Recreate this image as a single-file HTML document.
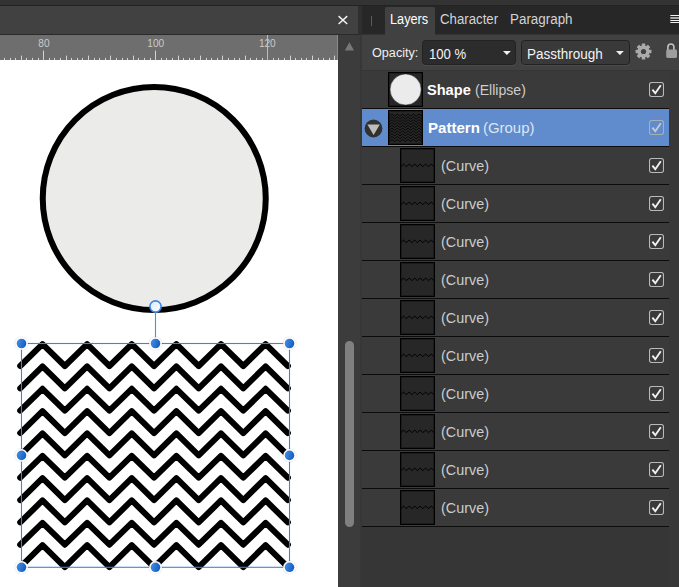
<!DOCTYPE html>
<html><head><meta charset="utf-8"><title>Layers</title>
<style>
html,body{margin:0;padding:0;}
body{width:679px;height:587px;overflow:hidden;background:#3c3c3c;font-family:"Liberation Sans",sans-serif;position:relative;}
.abs{position:absolute;}
.tx{position:absolute;white-space:nowrap;line-height:18px;transform-origin:0 50%;}
#topband{left:0;top:0;width:679px;height:5px;background:#333;}
#topline{left:0;top:5px;width:679px;height:1px;background:#232323;}
#toolbar{left:0;top:6px;width:358px;height:28px;background:#414141;}
#gap{left:358px;top:6px;width:4px;height:29px;background:#2f2f2f;}
#tbline{left:0;top:34px;width:358px;height:1px;background:#2a2a2a;}
#ruler{left:0;top:35px;width:337px;height:25px;background:#6e6e6e;overflow:hidden;}
#rulerR{left:337px;top:35px;width:1px;height:25px;background:#8a8a8a;}
#canvas{left:0;top:60px;width:338px;height:527px;background:#fff;}
#vscroll{left:338px;top:35px;width:22px;height:552px;background:#3c3c3c;}
#vdiv{left:360px;top:35px;width:2px;height:552px;background:#373737;}
#thumb{left:345px;top:340.5px;width:9px;height:186.5px;border-radius:4.5px;background:#808080;}
#panel{left:362px;top:6px;width:317px;height:581px;background:#363636;}
#tabbar{left:0;top:0;width:317px;height:28px;background:#272727;border-bottom:1px solid #333;}
#tabL{left:22.5px;top:1.3px;width:50px;height:28px;background:#414141;border-radius:2px 2px 0 0;}
.tab{position:absolute;top:5.6px;font-size:13.5px;line-height:16px;color:#d2d2d2;white-space:nowrap;}
#oprow{left:0;top:29px;width:317px;height:35px;background:#414141;}
.dd{position:absolute;top:5.4px;height:24.2px;background:#2c2c2c;border:1px solid #222;border-radius:3.5px;box-sizing:border-box;box-shadow:0 1px 0 rgba(255,255,255,0.06);}
.ddt{position:absolute;font-size:13.5px;line-height:16px;color:#f2f2f2;white-space:nowrap;}
#layers{left:0;top:0;width:307px;height:581px;}
.row{position:absolute;left:0;width:307px;height:37px;background:#3a3a3a;border-top:1px solid #0c0c0c;}
.row.sel{background:#608ccd;}
.th{position:absolute;top:1.2px;width:34.6px;height:34.5px;overflow:hidden;background:#272727;box-shadow:inset 0 0 0 1px #000, inset 0 0 0 2px rgba(0,0,0,0.3);}
.th svg{display:block;}
.lt{position:absolute;top:11px;font-size:13.5px;line-height:16px;color:#fff;white-space:nowrap;}
.lt b{font-weight:700;font-size:14px;}
.g{color:#cfcfcf;}
.g2{color:#dbe4f3;}
.ck{position:absolute;left:287px;top:11px;}
.tog{position:absolute;left:2.3px;top:9.8px;}
#rightcol{left:307px;top:64px;width:10px;height:517px;background:#383838;}
</style></head><body>
<div class="abs" id="topband"></div><div class="abs" id="topline"></div>
<div class="abs" id="toolbar"></div><div class="abs" id="gap"></div><div class="abs" id="tbline"></div>
<div class="abs" id="ruler"></div><div class="abs" id="rulerR"></div>
<div class="abs" id="canvas"></div>
<div class="abs" id="vscroll"></div><div class="abs" id="vdiv"></div><div class="abs" id="thumb"></div>

<svg class="abs" style="left:0;top:0" width="362" height="587" viewBox="0 0 362 587">
<defs>
<linearGradient id="hg" x1="0" y1="0" x2="1" y2="0.3"><stop offset="0" stop-color="#4a90e2"/><stop offset="1" stop-color="#1660c4"/></linearGradient>
<linearGradient id="rg" x1="0" y1="0" x2="1" y2="1"><stop offset="0" stop-color="#dbe8fa"/><stop offset="1" stop-color="#ffffff"/></linearGradient>
<clipPath id="cv"><rect x="0" y="60" width="338" height="527"/></clipPath>
</defs>
<g font-family="Liberation Sans, sans-serif" font-size="10.1" fill="#cccccc" text-anchor="middle" opacity="0.99">
<text x="43.9" y="46.8">80</text><text x="155.7" y="46.8">100</text><text x="267.3" y="46.8">120</text>
</g>
<rect x="4" y="57.90" width="1" height="2.10" fill="#d4d4d4"/><rect x="10" y="57.90" width="1" height="2.10" fill="#d4d4d4"/><rect x="15" y="57.90" width="1" height="2.10" fill="#d4d4d4"/><rect x="21" y="55.60" width="1" height="4.40" fill="#d4d4d4"/><rect x="26" y="57.90" width="1" height="2.10" fill="#d4d4d4"/><rect x="32" y="57.90" width="1" height="2.10" fill="#d4d4d4"/><rect x="38" y="57.90" width="1" height="2.10" fill="#d4d4d4"/><rect x="43" y="50.60" width="1" height="9.40" fill="#d4d4d4"/><rect x="49" y="57.90" width="1" height="2.10" fill="#d4d4d4"/><rect x="54" y="57.90" width="1" height="2.10" fill="#d4d4d4"/><rect x="60" y="57.90" width="1" height="2.10" fill="#d4d4d4"/><rect x="66" y="55.60" width="1" height="4.40" fill="#d4d4d4"/><rect x="71" y="57.90" width="1" height="2.10" fill="#d4d4d4"/><rect x="77" y="57.90" width="1" height="2.10" fill="#d4d4d4"/><rect x="82" y="57.90" width="1" height="2.10" fill="#d4d4d4"/><rect x="88" y="55.60" width="1" height="4.40" fill="#d4d4d4"/><rect x="94" y="57.90" width="1" height="2.10" fill="#d4d4d4"/><rect x="99" y="57.90" width="1" height="2.10" fill="#d4d4d4"/><rect x="105" y="57.90" width="1" height="2.10" fill="#d4d4d4"/><rect x="110" y="55.60" width="1" height="4.40" fill="#d4d4d4"/><rect x="116" y="57.90" width="1" height="2.10" fill="#d4d4d4"/><rect x="122" y="57.90" width="1" height="2.10" fill="#d4d4d4"/><rect x="127" y="57.90" width="1" height="2.10" fill="#d4d4d4"/><rect x="133" y="55.60" width="1" height="4.40" fill="#d4d4d4"/><rect x="138" y="57.90" width="1" height="2.10" fill="#d4d4d4"/><rect x="144" y="57.90" width="1" height="2.10" fill="#d4d4d4"/><rect x="150" y="57.90" width="1" height="2.10" fill="#d4d4d4"/><rect x="155" y="50.60" width="1" height="9.40" fill="#d4d4d4"/><rect x="161" y="57.90" width="1" height="2.10" fill="#d4d4d4"/><rect x="166" y="57.90" width="1" height="2.10" fill="#d4d4d4"/><rect x="172" y="57.90" width="1" height="2.10" fill="#d4d4d4"/><rect x="178" y="55.60" width="1" height="4.40" fill="#d4d4d4"/><rect x="183" y="57.90" width="1" height="2.10" fill="#d4d4d4"/><rect x="189" y="57.90" width="1" height="2.10" fill="#d4d4d4"/><rect x="194" y="57.90" width="1" height="2.10" fill="#d4d4d4"/><rect x="200" y="55.60" width="1" height="4.40" fill="#d4d4d4"/><rect x="206" y="57.90" width="1" height="2.10" fill="#d4d4d4"/><rect x="211" y="57.90" width="1" height="2.10" fill="#d4d4d4"/><rect x="217" y="57.90" width="1" height="2.10" fill="#d4d4d4"/><rect x="222" y="55.60" width="1" height="4.40" fill="#d4d4d4"/><rect x="228" y="57.90" width="1" height="2.10" fill="#d4d4d4"/><rect x="234" y="57.90" width="1" height="2.10" fill="#d4d4d4"/><rect x="239" y="57.90" width="1" height="2.10" fill="#d4d4d4"/><rect x="245" y="55.60" width="1" height="4.40" fill="#d4d4d4"/><rect x="250" y="57.90" width="1" height="2.10" fill="#d4d4d4"/><rect x="256" y="57.90" width="1" height="2.10" fill="#d4d4d4"/><rect x="262" y="57.90" width="1" height="2.10" fill="#d4d4d4"/><rect x="267" y="50.60" width="1" height="9.40" fill="#d4d4d4"/><rect x="273" y="57.90" width="1" height="2.10" fill="#d4d4d4"/><rect x="278" y="57.90" width="1" height="2.10" fill="#d4d4d4"/><rect x="284" y="57.90" width="1" height="2.10" fill="#d4d4d4"/><rect x="290" y="55.60" width="1" height="4.40" fill="#d4d4d4"/><rect x="295" y="57.90" width="1" height="2.10" fill="#d4d4d4"/><rect x="301" y="57.90" width="1" height="2.10" fill="#d4d4d4"/><rect x="306" y="57.90" width="1" height="2.10" fill="#d4d4d4"/><rect x="312" y="55.60" width="1" height="4.40" fill="#d4d4d4"/><rect x="318" y="57.90" width="1" height="2.10" fill="#d4d4d4"/><rect x="323" y="57.90" width="1" height="2.10" fill="#d4d4d4"/><rect x="329" y="57.90" width="1" height="2.10" fill="#d4d4d4"/><rect x="334" y="55.60" width="1" height="4.40" fill="#d4d4d4"/>
<rect x="267" y="35" width="1" height="25" fill="#bdbdbd"/>
<!-- close X -->
<path d="M338.6 16.1 L347.2 24 M347.2 16.1 L338.6 24" stroke="#f2f2f2" stroke-width="1.45" fill="none"/>
<!-- scroll up arrow -->
<path d="M344.8 50.6 L349.4 42.3 L354 50.6 Z" fill="#777"/>
<g clip-path="url(#cv)">
<circle cx="154.25" cy="198.5" r="111.5" fill="#ebebe9" stroke="#000" stroke-width="6"/>
<g fill="none" stroke="#000" stroke-width="6" stroke-linecap="round" stroke-linejoin="round"><polyline points="20.19,366.00 42.50,344.10 64.81,366.00 87.12,344.10 109.43,366.00 131.74,344.10 154.05,366.00 176.36,344.10 198.67,366.00 220.98,344.10 243.29,366.00 265.60,344.10 287.91,366.00"/><polyline points="20.19,388.34 42.50,366.44 64.81,388.34 87.12,366.44 109.43,388.34 131.74,366.44 154.05,388.34 176.36,366.44 198.67,388.34 220.98,366.44 243.29,388.34 265.60,366.44 287.91,388.34"/><polyline points="20.19,410.68 42.50,388.78 64.81,410.68 87.12,388.78 109.43,410.68 131.74,388.78 154.05,410.68 176.36,388.78 198.67,410.68 220.98,388.78 243.29,410.68 265.60,388.78 287.91,410.68"/><polyline points="20.19,433.02 42.50,411.12 64.81,433.02 87.12,411.12 109.43,433.02 131.74,411.12 154.05,433.02 176.36,411.12 198.67,433.02 220.98,411.12 243.29,433.02 265.60,411.12 287.91,433.02"/><polyline points="20.19,455.36 42.50,433.46 64.81,455.36 87.12,433.46 109.43,455.36 131.74,433.46 154.05,455.36 176.36,433.46 198.67,455.36 220.98,433.46 243.29,455.36 265.60,433.46 287.91,455.36"/><polyline points="20.19,477.70 42.50,455.80 64.81,477.70 87.12,455.80 109.43,477.70 131.74,455.80 154.05,477.70 176.36,455.80 198.67,477.70 220.98,455.80 243.29,477.70 265.60,455.80 287.91,477.70"/><polyline points="20.19,500.04 42.50,478.14 64.81,500.04 87.12,478.14 109.43,500.04 131.74,478.14 154.05,500.04 176.36,478.14 198.67,500.04 220.98,478.14 243.29,500.04 265.60,478.14 287.91,500.04"/><polyline points="20.19,522.38 42.50,500.48 64.81,522.38 87.12,500.48 109.43,522.38 131.74,500.48 154.05,522.38 176.36,500.48 198.67,522.38 220.98,500.48 243.29,522.38 265.60,500.48 287.91,522.38"/><polyline points="20.19,544.72 42.50,522.82 64.81,544.72 87.12,522.82 109.43,544.72 131.74,522.82 154.05,544.72 176.36,522.82 198.67,544.72 220.98,522.82 243.29,544.72 265.60,522.82 287.91,544.72"/><polyline points="20.19,567.06 42.50,545.16 64.81,567.06 87.12,545.16 109.43,567.06 131.74,545.16 154.05,567.06 176.36,545.16 198.67,567.06 220.98,545.16 243.29,567.06 265.60,545.16 287.91,567.06"/></g>
<rect x="21.5" y="343.5" width="268.0" height="223.79999999999995" fill="none" stroke="#3b84e3" stroke-width="1.1"/><line x1="155.5" y1="306.5" x2="155.5" y2="343.5" stroke="#4a90e8" stroke-width="1.1"/><circle cx="21.5" cy="343.5" r="7.3" fill="#000" fill-opacity="0.06"/><circle cx="21.5" cy="343.5" r="6.3" fill="#fff"/><circle cx="21.5" cy="343.5" r="4.8" fill="url(#hg)"/><circle cx="155.5" cy="343.5" r="7.3" fill="#000" fill-opacity="0.06"/><circle cx="155.5" cy="343.5" r="6.3" fill="#fff"/><circle cx="155.5" cy="343.5" r="4.8" fill="url(#hg)"/><circle cx="289.5" cy="343.5" r="7.3" fill="#000" fill-opacity="0.06"/><circle cx="289.5" cy="343.5" r="6.3" fill="#fff"/><circle cx="289.5" cy="343.5" r="4.8" fill="url(#hg)"/><circle cx="21.5" cy="455.4" r="7.3" fill="#000" fill-opacity="0.06"/><circle cx="21.5" cy="455.4" r="6.3" fill="#fff"/><circle cx="21.5" cy="455.4" r="4.8" fill="url(#hg)"/><circle cx="289.5" cy="455.4" r="7.3" fill="#000" fill-opacity="0.06"/><circle cx="289.5" cy="455.4" r="6.3" fill="#fff"/><circle cx="289.5" cy="455.4" r="4.8" fill="url(#hg)"/><circle cx="21.5" cy="567.3" r="7.3" fill="#000" fill-opacity="0.06"/><circle cx="21.5" cy="567.3" r="6.3" fill="#fff"/><circle cx="21.5" cy="567.3" r="4.8" fill="url(#hg)"/><circle cx="155.5" cy="567.3" r="7.3" fill="#000" fill-opacity="0.06"/><circle cx="155.5" cy="567.3" r="6.3" fill="#fff"/><circle cx="155.5" cy="567.3" r="4.8" fill="url(#hg)"/><circle cx="289.5" cy="567.3" r="7.3" fill="#000" fill-opacity="0.06"/><circle cx="289.5" cy="567.3" r="6.3" fill="#fff"/><circle cx="289.5" cy="567.3" r="4.8" fill="url(#hg)"/><circle cx="155.5" cy="306.5" r="5.6" fill="url(#rg)" stroke="#3b86e6" stroke-width="1.6"/>
</g>
</svg>

<div class="abs" id="panel">
 <div class="abs" id="tabbar"></div>
 <div class="abs" id="tabL"></div>
 <div class="abs" style="left:9px;top:9.5px;width:1px;height:10px;background:#5c5c5c"></div>
 <svg class="abs" style="left:308px;top:8px" width="9" height="11" viewBox="0 0 9 11"><rect x="0" y="0" width="9" height="11" fill="#1c1c1c" opacity="0.0"/><rect x="0.3" y="1" width="9" height="1" fill="#f4f4f4"/><rect x="0.3" y="3" width="9" height="2" fill="#a8a8a8"/><rect x="0.3" y="6" width="9" height="1" fill="#f4f4f4"/><rect x="0.3" y="8" width="9" height="1" fill="#f4f4f4"/></svg>
 <div class="abs" id="oprow">
   <div class="dd" style="left:60px;width:94px"></div>
   <svg class="abs" style="left:140.9px;top:15.5px" width="7.8" height="4.2" viewBox="0 0 7.8 4.2"><path d="M0 0 H7.8 L3.9 4.1 Z" fill="#f0f0f0"/></svg>
   <div class="dd" style="left:159px;width:109px;background:#393939;border-color:#212121"></div>
   <svg class="abs" style="left:254.4px;top:15.5px" width="7.8" height="4.2" viewBox="0 0 7.8 4.2"><path d="M0 0 H7.8 L3.9 4.1 Z" fill="#f0f0f0"/></svg>
   <!-- gear -->
   <svg class="abs" style="left:273px;top:8px" width="17" height="17" viewBox="-8.5 -8.5 17 17"><g fill="#aaaaaa">
     <circle r="6"/>
     <rect x="-1.8" y="-7.9" width="3.6" height="15.8" rx="0.5"/><rect x="-1.8" y="-7.9" width="3.6" height="15.8" rx="0.5" transform="rotate(45)"/><rect x="-1.8" y="-7.9" width="3.6" height="15.8" rx="0.5" transform="rotate(90)"/><rect x="-1.8" y="-7.9" width="3.6" height="15.8" rx="0.5" transform="rotate(135)"/>
     </g><circle r="2.6" fill="#414141"/></svg>
   <!-- lock -->
   <svg class="abs" style="left:303px;top:7px" width="14" height="18" viewBox="0 0 14 18"><path d="M2.9 8.4 V5 a3 3 0 0 1 6 0 V8.4" fill="none" stroke="#c2c2c2" stroke-width="1.6"/><rect x="1.2" y="7.4" width="10.8" height="8.6" rx="1.4" fill="#9e9e9e"/></svg>
 </div>
 <div class="abs" id="layers">
 <div class="row" style="top:64px;border-top-color:#353535"><div class="th" style="left:26px"><svg width="35" height="35" viewBox="0 0 35 35"><circle cx="17.6" cy="17.5" r="15.6" fill="#ebebeb" stroke="#111" stroke-width="0.5"/></svg></div><svg class="ck" width="15" height="15" viewBox="0 0 15 15"><rect x="0.5" y="0.5" width="14" height="14" rx="2.2" fill="none" stroke="#b9b9b9" stroke-width="1.1"/><path d="M3.4 7.6 L6.3 11.2 L11.8 3.2" fill="none" stroke="#f0f0f0" stroke-width="1.9"/></svg></div><div class="row sel" style="top:102px"><div class="tog"><svg width="19" height="19" viewBox="0 0 19 19"><circle cx="9.5" cy="9.5" r="8.9" fill="#313131"/><path d="M3.4 5.5 H15.8 L9.6 16 Z" fill="#bcbcbc"/></svg></div><div class="th" style="left:26px"><svg width="35" height="35" viewBox="0 0 35 35"><g fill="none" stroke="#000" stroke-opacity="0.85" stroke-width="1"><polyline points="1.20,6.20 3.90,4.00 6.60,6.20 9.30,4.00 12.00,6.20 14.70,4.00 17.40,6.20 20.10,4.00 22.80,6.20 25.50,4.00 28.20,6.20 30.90,4.00 33.60,6.20"/><polyline points="1.20,9.02 3.90,6.82 6.60,9.02 9.30,6.82 12.00,9.02 14.70,6.82 17.40,9.02 20.10,6.82 22.80,9.02 25.50,6.82 28.20,9.02 30.90,6.82 33.60,9.02"/><polyline points="1.20,11.84 3.90,9.64 6.60,11.84 9.30,9.64 12.00,11.84 14.70,9.64 17.40,11.84 20.10,9.64 22.80,11.84 25.50,9.64 28.20,11.84 30.90,9.64 33.60,11.84"/><polyline points="1.20,14.66 3.90,12.46 6.60,14.66 9.30,12.46 12.00,14.66 14.70,12.46 17.40,14.66 20.10,12.46 22.80,14.66 25.50,12.46 28.20,14.66 30.90,12.46 33.60,14.66"/><polyline points="1.20,17.48 3.90,15.28 6.60,17.48 9.30,15.28 12.00,17.48 14.70,15.28 17.40,17.48 20.10,15.28 22.80,17.48 25.50,15.28 28.20,17.48 30.90,15.28 33.60,17.48"/><polyline points="1.20,20.30 3.90,18.10 6.60,20.30 9.30,18.10 12.00,20.30 14.70,18.10 17.40,20.30 20.10,18.10 22.80,20.30 25.50,18.10 28.20,20.30 30.90,18.10 33.60,20.30"/><polyline points="1.20,23.12 3.90,20.92 6.60,23.12 9.30,20.92 12.00,23.12 14.70,20.92 17.40,23.12 20.10,20.92 22.80,23.12 25.50,20.92 28.20,23.12 30.90,20.92 33.60,23.12"/><polyline points="1.20,25.94 3.90,23.74 6.60,25.94 9.30,23.74 12.00,25.94 14.70,23.74 17.40,25.94 20.10,23.74 22.80,25.94 25.50,23.74 28.20,25.94 30.90,23.74 33.60,25.94"/><polyline points="1.20,28.76 3.90,26.56 6.60,28.76 9.30,26.56 12.00,28.76 14.70,26.56 17.40,28.76 20.10,26.56 22.80,28.76 25.50,26.56 28.20,28.76 30.90,26.56 33.60,28.76"/><polyline points="1.20,31.58 3.90,29.38 6.60,31.58 9.30,29.38 12.00,31.58 14.70,29.38 17.40,31.58 20.10,29.38 22.80,31.58 25.50,29.38 28.20,31.58 30.90,29.38 33.60,31.58"/></g></svg></div><svg class="ck" width="15" height="15" viewBox="0 0 15 15"><rect x="0.5" y="0.5" width="14" height="14" rx="2.2" fill="none" stroke="#a9aeb6" stroke-width="1.1"/><path d="M3.4 7.6 L6.3 11.2 L11.8 3.2" fill="none" stroke="#c6c9cf" stroke-width="1.9"/></svg></div><div class="row" style="top:140px"><div class="th" style="left:38px"><svg width="35" height="35" viewBox="0 0 35 35"><polyline points="0.80,18.60 3.57,16.10 6.33,18.60 9.10,16.10 11.87,18.60 14.63,16.10 17.40,18.60 20.17,16.10 22.93,18.60 25.70,16.10 28.47,18.60 31.23,16.10 34.00,18.60" fill="none" stroke="#000" stroke-width="1"/></svg></div><svg class="ck" width="15" height="15" viewBox="0 0 15 15"><rect x="0.5" y="0.5" width="14" height="14" rx="2.2" fill="none" stroke="#b9b9b9" stroke-width="1.1"/><path d="M3.4 7.6 L6.3 11.2 L11.8 3.2" fill="none" stroke="#f0f0f0" stroke-width="1.9"/></svg></div><div class="row" style="top:178px"><div class="th" style="left:38px"><svg width="35" height="35" viewBox="0 0 35 35"><polyline points="0.80,18.60 3.57,16.10 6.33,18.60 9.10,16.10 11.87,18.60 14.63,16.10 17.40,18.60 20.17,16.10 22.93,18.60 25.70,16.10 28.47,18.60 31.23,16.10 34.00,18.60" fill="none" stroke="#000" stroke-width="1"/></svg></div><svg class="ck" width="15" height="15" viewBox="0 0 15 15"><rect x="0.5" y="0.5" width="14" height="14" rx="2.2" fill="none" stroke="#b9b9b9" stroke-width="1.1"/><path d="M3.4 7.6 L6.3 11.2 L11.8 3.2" fill="none" stroke="#f0f0f0" stroke-width="1.9"/></svg></div><div class="row" style="top:216px"><div class="th" style="left:38px"><svg width="35" height="35" viewBox="0 0 35 35"><polyline points="0.80,18.60 3.57,16.10 6.33,18.60 9.10,16.10 11.87,18.60 14.63,16.10 17.40,18.60 20.17,16.10 22.93,18.60 25.70,16.10 28.47,18.60 31.23,16.10 34.00,18.60" fill="none" stroke="#000" stroke-width="1"/></svg></div><svg class="ck" width="15" height="15" viewBox="0 0 15 15"><rect x="0.5" y="0.5" width="14" height="14" rx="2.2" fill="none" stroke="#b9b9b9" stroke-width="1.1"/><path d="M3.4 7.6 L6.3 11.2 L11.8 3.2" fill="none" stroke="#f0f0f0" stroke-width="1.9"/></svg></div><div class="row" style="top:254px"><div class="th" style="left:38px"><svg width="35" height="35" viewBox="0 0 35 35"><polyline points="0.80,18.60 3.57,16.10 6.33,18.60 9.10,16.10 11.87,18.60 14.63,16.10 17.40,18.60 20.17,16.10 22.93,18.60 25.70,16.10 28.47,18.60 31.23,16.10 34.00,18.60" fill="none" stroke="#000" stroke-width="1"/></svg></div><svg class="ck" width="15" height="15" viewBox="0 0 15 15"><rect x="0.5" y="0.5" width="14" height="14" rx="2.2" fill="none" stroke="#b9b9b9" stroke-width="1.1"/><path d="M3.4 7.6 L6.3 11.2 L11.8 3.2" fill="none" stroke="#f0f0f0" stroke-width="1.9"/></svg></div><div class="row" style="top:292px"><div class="th" style="left:38px"><svg width="35" height="35" viewBox="0 0 35 35"><polyline points="0.80,18.60 3.57,16.10 6.33,18.60 9.10,16.10 11.87,18.60 14.63,16.10 17.40,18.60 20.17,16.10 22.93,18.60 25.70,16.10 28.47,18.60 31.23,16.10 34.00,18.60" fill="none" stroke="#000" stroke-width="1"/></svg></div><svg class="ck" width="15" height="15" viewBox="0 0 15 15"><rect x="0.5" y="0.5" width="14" height="14" rx="2.2" fill="none" stroke="#b9b9b9" stroke-width="1.1"/><path d="M3.4 7.6 L6.3 11.2 L11.8 3.2" fill="none" stroke="#f0f0f0" stroke-width="1.9"/></svg></div><div class="row" style="top:330px"><div class="th" style="left:38px"><svg width="35" height="35" viewBox="0 0 35 35"><polyline points="0.80,18.60 3.57,16.10 6.33,18.60 9.10,16.10 11.87,18.60 14.63,16.10 17.40,18.60 20.17,16.10 22.93,18.60 25.70,16.10 28.47,18.60 31.23,16.10 34.00,18.60" fill="none" stroke="#000" stroke-width="1"/></svg></div><svg class="ck" width="15" height="15" viewBox="0 0 15 15"><rect x="0.5" y="0.5" width="14" height="14" rx="2.2" fill="none" stroke="#b9b9b9" stroke-width="1.1"/><path d="M3.4 7.6 L6.3 11.2 L11.8 3.2" fill="none" stroke="#f0f0f0" stroke-width="1.9"/></svg></div><div class="row" style="top:368px"><div class="th" style="left:38px"><svg width="35" height="35" viewBox="0 0 35 35"><polyline points="0.80,18.60 3.57,16.10 6.33,18.60 9.10,16.10 11.87,18.60 14.63,16.10 17.40,18.60 20.17,16.10 22.93,18.60 25.70,16.10 28.47,18.60 31.23,16.10 34.00,18.60" fill="none" stroke="#000" stroke-width="1"/></svg></div><svg class="ck" width="15" height="15" viewBox="0 0 15 15"><rect x="0.5" y="0.5" width="14" height="14" rx="2.2" fill="none" stroke="#b9b9b9" stroke-width="1.1"/><path d="M3.4 7.6 L6.3 11.2 L11.8 3.2" fill="none" stroke="#f0f0f0" stroke-width="1.9"/></svg></div><div class="row" style="top:406px"><div class="th" style="left:38px"><svg width="35" height="35" viewBox="0 0 35 35"><polyline points="0.80,18.60 3.57,16.10 6.33,18.60 9.10,16.10 11.87,18.60 14.63,16.10 17.40,18.60 20.17,16.10 22.93,18.60 25.70,16.10 28.47,18.60 31.23,16.10 34.00,18.60" fill="none" stroke="#000" stroke-width="1"/></svg></div><svg class="ck" width="15" height="15" viewBox="0 0 15 15"><rect x="0.5" y="0.5" width="14" height="14" rx="2.2" fill="none" stroke="#b9b9b9" stroke-width="1.1"/><path d="M3.4 7.6 L6.3 11.2 L11.8 3.2" fill="none" stroke="#f0f0f0" stroke-width="1.9"/></svg></div><div class="row" style="top:444px"><div class="th" style="left:38px"><svg width="35" height="35" viewBox="0 0 35 35"><polyline points="0.80,18.60 3.57,16.10 6.33,18.60 9.10,16.10 11.87,18.60 14.63,16.10 17.40,18.60 20.17,16.10 22.93,18.60 25.70,16.10 28.47,18.60 31.23,16.10 34.00,18.60" fill="none" stroke="#000" stroke-width="1"/></svg></div><svg class="ck" width="15" height="15" viewBox="0 0 15 15"><rect x="0.5" y="0.5" width="14" height="14" rx="2.2" fill="none" stroke="#b9b9b9" stroke-width="1.1"/><path d="M3.4 7.6 L6.3 11.2 L11.8 3.2" fill="none" stroke="#f0f0f0" stroke-width="1.9"/></svg></div><div class="row" style="top:482px"><div class="th" style="left:38px"><svg width="35" height="35" viewBox="0 0 35 35"><polyline points="0.80,18.60 3.57,16.10 6.33,18.60 9.10,16.10 11.87,18.60 14.63,16.10 17.40,18.60 20.17,16.10 22.93,18.60 25.70,16.10 28.47,18.60 31.23,16.10 34.00,18.60" fill="none" stroke="#000" stroke-width="1"/></svg></div><svg class="ck" width="15" height="15" viewBox="0 0 15 15"><rect x="0.5" y="0.5" width="14" height="14" rx="2.2" fill="none" stroke="#b9b9b9" stroke-width="1.1"/><path d="M3.4 7.6 L6.3 11.2 L11.8 3.2" fill="none" stroke="#f0f0f0" stroke-width="1.9"/></svg></div><div class="abs" style="left:0;top:520px;width:307px;height:1px;background:#0c0c0c"></div>
 </div>
 <div class="abs" id="rightcol"></div>
</div>
<div id="txl"><div class="tx" id="tLayers" style="left:390.13px;top:10.00px;font-size:14px;color:#ffffff;transform:scaleX(0.9089);">Layers</div><div class="tx" id="tChar" style="left:439.59px;top:10.00px;font-size:14px;color:#d4d4d4;transform:scaleX(0.9447);">Character</div><div class="tx" id="tPara" style="left:510.11px;top:10.00px;font-size:14px;color:#d4d4d4;transform:scaleX(0.9566);">Paragraph</div><div class="tx" id="tOp" style="left:371.89px;top:44.00px;font-size:12.5px;color:#f0f0f0;transform:scaleX(1.0114);">Opacity:</div><div class="tx" id="t100" style="left:429.48px;top:45.00px;font-size:14px;color:#f4f4f4;transform:scaleX(0.9388);">100 %</div><div class="tx" id="tPass" style="left:527.08px;top:45.00px;font-size:14px;color:#f4f4f4;transform:scaleX(0.9628);">Passthrough</div><div class="tx" id="tShape" style="left:427.45px;top:81.00px;font-size:15px;color:#ffffff;font-weight:700;transform:scaleX(0.9716);">Shape</div><div class="tx" id="tEll" style="left:475.15px;top:81.00px;font-size:15px;color:#cdcdcd;transform:scaleX(0.9381);">(Ellipse)</div><div class="tx" id="tPat" style="left:427.79px;top:119.00px;font-size:15px;color:#ffffff;font-weight:700;transform:scaleX(1.0028);">Pattern</div><div class="tx" id="tGrp" style="left:483.00px;top:119.00px;font-size:15px;color:#dde5f2;transform:scaleX(0.9956);">(Group)</div><div class="tx" id="tCur0" style="left:440.67px;top:157.00px;font-size:15px;color:#cdcdcd;transform:scaleX(0.9584);">(Curve)</div><div class="tx" id="tCur1" style="left:440.67px;top:195.00px;font-size:15px;color:#cdcdcd;transform:scaleX(0.9584);">(Curve)</div><div class="tx" id="tCur2" style="left:440.67px;top:233.00px;font-size:15px;color:#cdcdcd;transform:scaleX(0.9584);">(Curve)</div><div class="tx" id="tCur3" style="left:440.67px;top:271.00px;font-size:15px;color:#cdcdcd;transform:scaleX(0.9584);">(Curve)</div><div class="tx" id="tCur4" style="left:440.67px;top:309.00px;font-size:15px;color:#cdcdcd;transform:scaleX(0.9584);">(Curve)</div><div class="tx" id="tCur5" style="left:440.67px;top:347.00px;font-size:15px;color:#cdcdcd;transform:scaleX(0.9584);">(Curve)</div><div class="tx" id="tCur6" style="left:440.67px;top:385.00px;font-size:15px;color:#cdcdcd;transform:scaleX(0.9584);">(Curve)</div><div class="tx" id="tCur7" style="left:440.67px;top:423.00px;font-size:15px;color:#cdcdcd;transform:scaleX(0.9584);">(Curve)</div><div class="tx" id="tCur8" style="left:440.67px;top:461.00px;font-size:15px;color:#cdcdcd;transform:scaleX(0.9584);">(Curve)</div><div class="tx" id="tCur9" style="left:440.67px;top:499.00px;font-size:15px;color:#cdcdcd;transform:scaleX(0.9584);">(Curve)</div></div>
</body></html>
